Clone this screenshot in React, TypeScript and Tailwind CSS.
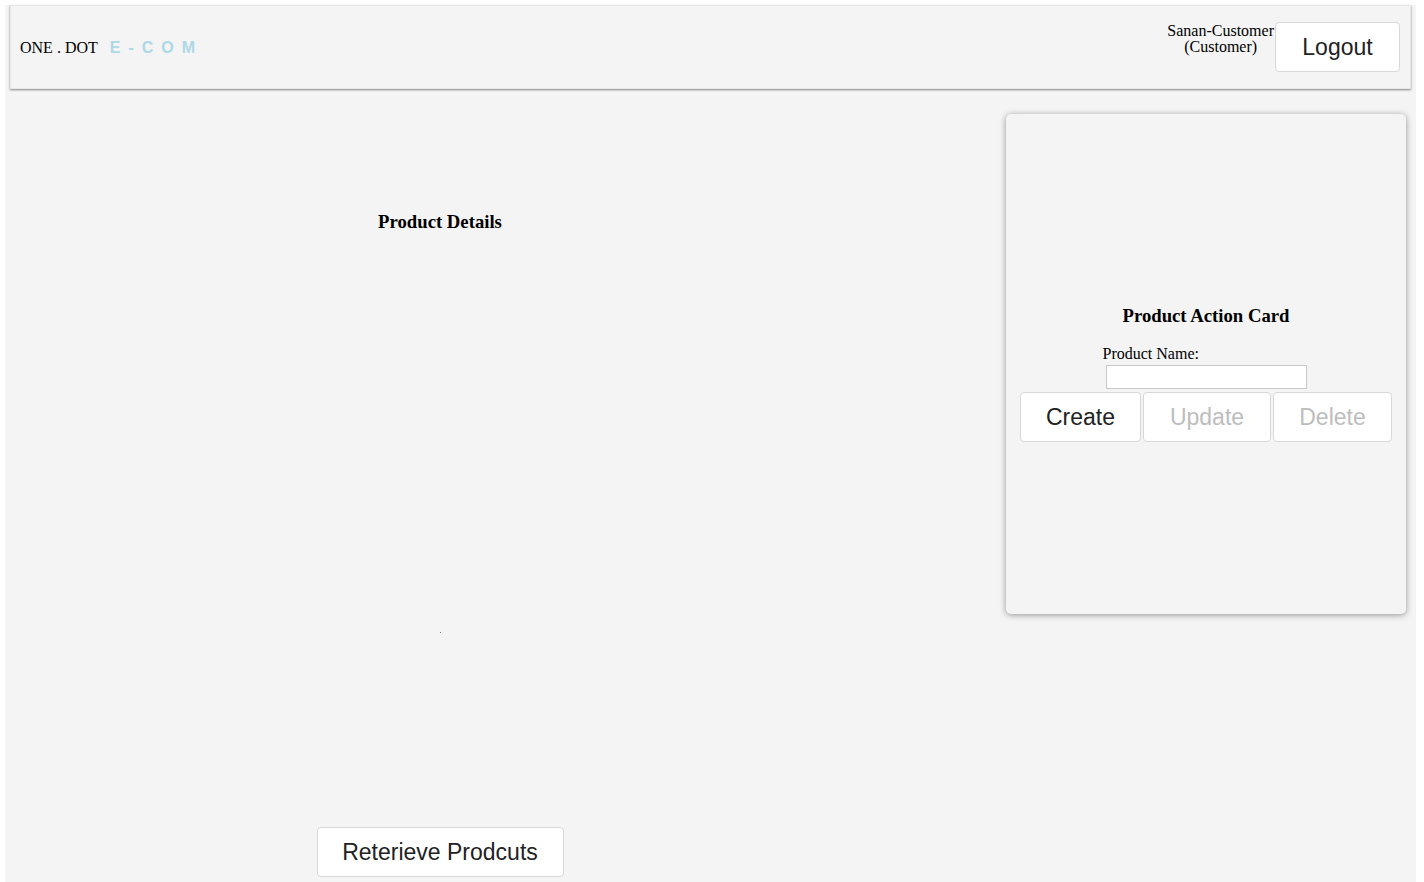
import { useState } from 'react'

const serif = "font-['Liberation_Serif','Times_New_Roman',serif]"
const sans = "font-['Liberation_Sans',Arial,sans-serif]"

function Header() {
  return (
    <div className="mx-[5px] mt-[5px] h-[84px] flex items-center justify-between bg-[#f4f4f4] border border-[#e6e6e6] shadow-[0_1px_2px_rgba(0,0,0,0.45)] pl-[9px] pr-[10px]">
      <div className="flex items-center pt-px">
        <span className={`${serif} text-[16px] text-black`}>ONE . DOT</span>
        <span className={`${sans} ml-[12px] text-[16px] font-bold text-[#add8e6] tracking-[8px]`}>E-COM</span>
      </div>
      <div className="flex items-start">
        <div className={`${serif} mt-px text-[16px] leading-[16px] text-black text-center`}>
          <div>Sanan-Customer</div>
          <div>(Customer)</div>
        </div>
        <button className={`${sans} ml-px h-[50px] w-[125px] bg-white border border-[#d8d8d8] rounded-[4px] text-[23px] text-[#222]`}>
          Logout
        </button>
      </div>
    </div>
  )
}

function ActionCard() {
  const [name, setName] = useState('')
  return (
    <div className="mt-[25px] mr-[10px] w-[400px] h-[500px] bg-[#f4f4f4] rounded-[5px] shadow-[0_1px_6px_rgba(0,0,0,0.4)] flex flex-col items-center justify-center">
      <h3 className={`${serif} my-[19px] text-[18.72px] leading-[21px] font-bold text-black`}>Product Action Card</h3>
      <div className="w-[207px] flex flex-col items-center">
        <label className={`${serif} self-start text-[16px] leading-[18px] text-black`}>Product Name:</label>
        <input
          value={name}
          onChange={e => setName(e.target.value)}
          className="mt-[2px] w-[201px] h-[24px] bg-white border border-[#c8c8c8] outline-none"
        />
      </div>
      <div className={`${sans} mt-[3px] flex gap-[2px] text-[23px]`}>
        <button className="h-[50px] w-[121px] bg-white border border-[#d8d8d8] rounded-[4px] text-[#222]">Create</button>
        <button disabled className="h-[50px] w-[128px] bg-white border border-[#d8d8d8] rounded-[4px] text-[#bdbdbd]">Update</button>
        <button disabled className="h-[50px] w-[119px] bg-white border border-[#d8d8d8] rounded-[4px] text-[#bdbdbd]">Delete</button>
      </div>
    </div>
  )
}

export default function App() {
  return (
    <div className="min-h-screen bg-white">
      <div className="mx-[5px] w-[1411px] min-h-[882px] bg-[#f4f4f4] pb-[5px]">
        <Header />
        <div className="flex">
          {/* Product list */}
          <div className="w-[870px] flex flex-col items-center">
            <h3 className={`${serif} mt-[122px] text-[18.72px] leading-[21px] font-bold text-black`}>Product Details</h3>
            <div className="mt-[400px] w-px h-px bg-[#777]" />
            <button className={`${sans} mt-[194px] h-[50px] w-[247px] bg-white border border-[#d8d8d8] rounded-[4px] text-[23px] text-[#222]`}>
              Reterieve Prodcuts
            </button>
          </div>
          <div className="flex-1 flex justify-end">
            <ActionCard />
          </div>
        </div>
      </div>
    </div>
  )
}
